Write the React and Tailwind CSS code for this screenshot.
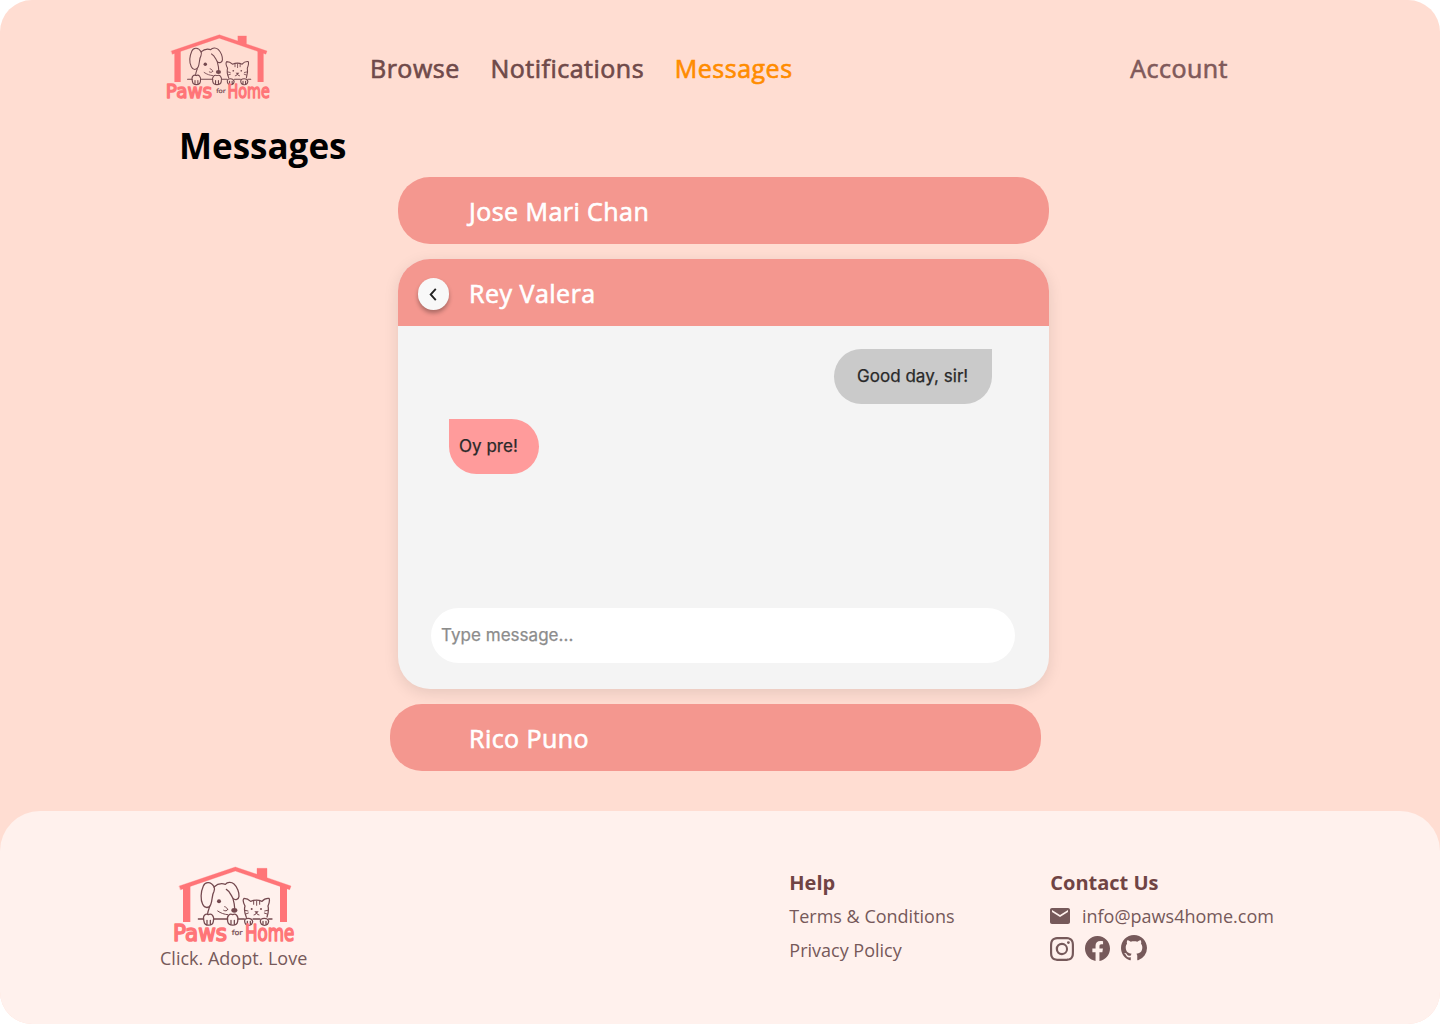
import React from 'react';
import { MdEmail } from 'react-icons/md';
import { BsInstagram, BsFacebook, BsGithub } from 'react-icons/bs';

function Logo({ className }) {
  return (
    <svg viewBox="21 15 372 237" className={`overflow-visible ${className}`} fill="none" strokeLinecap="round" strokeLinejoin="round">
      <g fill="#ff7578">
        <path d="M43 78 L211 21 L276 43 V25 H306 V53 L378 78 L374 89 L211 33 L47 89 Z" stroke="#ff7578" strokeWidth="1" />
        <path d="M54 82 L76 75 V186 H54 Z" />
        <path d="M345 75 L366 82 V186 H345 Z" />
      </g>
      <g stroke="#74494f" strokeWidth="3.8">
        <path d="M100 177 H116 M146 177 H188 M219 177 H238 M264 177 H285 M311 177 H321" />
        <path d="M147 80 C138 65 121 64 115 78 C107 96 106 119 113 133 C119 146 132 145 137 134 C143 121 140 105 147 94 C149 89 149 84 147 80" />
        <path d="M147 81 C158 71 172 70 181 73 C187 66 199 65 207 72 C217 81 223 98 222 109 C221 118 211 122 204 115 C198 107 196 94 184 88" />
        <path d="M134 140 C131 149 128 155 128 163" />
        <path d="M204 116 C207 127 209 136 209 145" />
        <path d="M158 153 C168 160 178 163 188 164 M176 151 C181 154 186 153 188 149 M179 140 C184 141 187 145 188 149" strokeWidth="3" />
        <path d="M117 184 C111 164 124 160 130 164 C138 159 149 166 145 184 C143 199 119 200 117 184 M126 181 V192 M136 181 V192" />
        <path d="M188 184 C184 166 195 160 203 164 C211 160 222 166 218 184 C216 199 191 200 188 184 M198 181 V192 M208 181 V192" />
        <path d="M239 184 C237 172 260 172 263 184 C262 200 240 200 239 184 M247 184 V194 M256 184 V194" />
        <path d="M286 184 C286 172 309 172 311 184 C310 200 287 200 286 184 M294 184 V194 M303 184 V194" />
        <path d="M244 172 C239 160 237 148 240 138 C234 127 234 118 237 115 C245 115 252 119 257 124 C267 120 282 120 291 124 C296 118 304 114 312 115 C315 121 312 131 309 138 C312 150 309 162 306 171" />
        <path d="M266 123 V133 M275 123 V136 M284 123 V133 M267 165 Q273 165 274 158 Q276 165 282 165 M249 153 L240 151 M250 159 L242 162 M299 153 L308 151 M298 159 L306 162" strokeWidth="3" />
      </g>
      <g fill="#74494f">
        <circle cx="162" cy="124" r="6" />
        <ellipse cx="208" cy="151" rx="9" ry="7" />
        <circle cx="260" cy="147" r="3" />
        <circle cx="288" cy="147" r="3" />
        <path d="M268 154 H281 L275 161 Z" />
      </g>
      <g fill="#ff7578" stroke="#ff7578" strokeWidth="5" fontFamily="'DejaVu Sans', sans-serif" fontSize="71">
        <text x="24" y="243" textLength="162" lengthAdjust="spacingAndGlyphs">Paws</text>
        <text x="240" y="243" textLength="148" lengthAdjust="spacingAndGlyphs">Home</text>
      </g>
      <text x="200" y="224" fill="#74494f" stroke="#74494f" strokeWidth="0.6" fontFamily="'DejaVu Sans', sans-serif" fontSize="21" textLength="33" lengthAdjust="spacingAndGlyphs">for</text>
    </svg>
  );
}

function NameBar({ name, className = '' }) {
  return (
    <div className={`flex h-[67px] w-[651px] items-center rounded-[32px] bg-[#f4978f] pt-[3px] text-white ${className}`}>
      <span className="text-[25px] tracking-[0.45px] [-webkit-text-stroke:0.65px]">{name}</span>
    </div>
  );
}

function Chat() {
  return (
    <section className="mt-[15px] ml-[398px] flex h-[430px] w-[651px] flex-col overflow-hidden rounded-[32px] bg-[#f4f4f4] shadow-[0_4px_15px_rgba(0,0,0,0.1)]">
      <header className="flex h-[67px] items-center bg-[#f4978f] pl-5">
        <button className="mt-[3px] flex h-8 w-[31px] items-center justify-center rounded-full bg-[#f8f8f8] shadow-[0_3px_4px_rgba(0,0,0,0.3)]">
          <svg viewBox="0 0 8 14" className="-ml-px h-[13px] w-2" fill="none" stroke="#222" strokeWidth="2">
            <path d="M7 1 L1.5 7 L7 13" />
          </svg>
        </button>
        <span className="ml-5 pt-[3px] text-[25px] tracking-[0.5px] text-white [-webkit-text-stroke:0.65px]">Rey Valera</span>
      </header>
      <div className="flex flex-1 flex-col font-['Inter',sans-serif] text-[17px] tracking-[0.03px] text-[#292929] [-webkit-text-stroke:0.25px]">
        <div className="mt-[23px] mr-[57px] flex h-[55px] w-[158px] items-center self-end rounded-[28px] rounded-tr-none bg-[#cacaca] pl-[23px]">
          Good day, sir!
        </div>
        <div className="mt-[15px] ml-[51px] flex h-[55px] w-[90px] items-center rounded-[28px] rounded-tl-none bg-[#ff9b9b] pl-[10px]">
          Oy pre!
        </div>
        <div className="mt-auto mb-[26px] ml-[33px] flex h-[55px] w-[584px] items-center rounded-full bg-white pl-[10px] text-[#8c8c8c]">
          Type message...
        </div>
      </div>
    </section>
  );
}

export default function App() {
  return (
    <div className="h-[1024px] w-[1440px] bg-white font-['Open_Sans',sans-serif]">
      <div className="flex h-full flex-col overflow-hidden rounded-[32px] bg-[#ffddd2]">
        <nav className="flex h-[121px] items-start pt-[33px] pl-[165.3px] text-[25px] leading-9 tracking-[0.5px] text-[#704a4a] [-webkit-text-stroke:0.65px]">
          <Logo className="h-[67.8px] w-[106.3px] tracking-normal" />
          <div className="mt-[17px] ml-[98.4px] flex gap-[30.7px]">
            <a>Browse</a>
            <a>Notifications</a>
            <a className="text-[#ff8c00]">Messages</a>
          </div>
          <a className="mt-[17px] mr-[212px] ml-auto text-[#80595a]">Account</a>
        </nav>
        <h1 className="ml-[179px] h-14 text-[35px] leading-[50px] font-bold text-black">Messages</h1>
        <NameBar name="Jose Mari Chan" className="ml-[398px] pl-[71px]" />
        <Chat />
        <NameBar name="Rico Puno" className="mt-[15px] ml-[390px] pl-[79px]" />
        <footer className="mt-10 flex h-[213px] rounded-t-[40px] bg-[#fff1ed] pl-40 text-[18px] leading-[34px] text-[#76595a]">
          <div className="w-[629.3px] pt-[54px]">
            <Logo className="ml-3 h-[79px] w-[124px]" />
            <p className="-mt-[3px]">Click. Adopt. Love</p>
          </div>
          <div className="w-[261px] pt-[55px]">
            <h2 className="h-[33px] text-[20px] font-bold text-[#704444]">Help</h2>
            <p>Terms &amp; Conditions</p>
            <p>Privacy Policy</p>
          </div>
          <div className="pt-[55px]">
            <h2 className="h-[33px] text-[20px] font-bold text-[#704444]">Contact Us</h2>
            <p className="flex items-center">
              <MdEmail className="-ml-[2px] size-6" />
              <span className="ml-[9.7px]">info@paws4home.com</span>
            </p>
            <div className="mt-[2px] flex items-center gap-[11px]">
              <BsInstagram className="mt-[2px] size-6" />
              <BsFacebook className="size-[25px]" />
              <BsGithub className="size-[26px]" />
            </div>
          </div>
        </footer>
      </div>
    </div>
  );
}
